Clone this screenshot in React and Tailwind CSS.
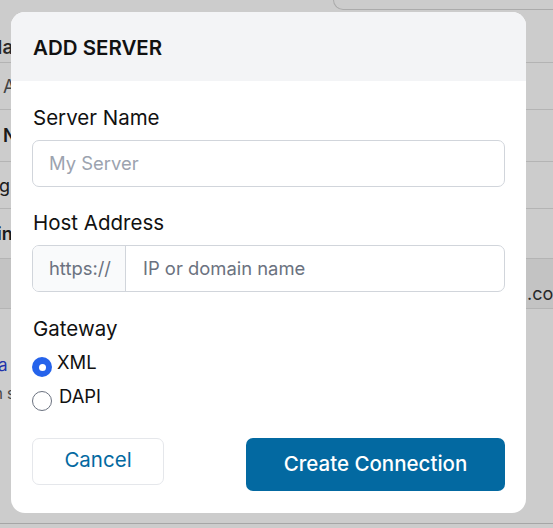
import React from "react";

function BgRow({ h, left, leftCls = "", right, shade = false }) {
  return (
    <div className={`relative flex items-center border-b border-[#e2e2e2] ${shade ? "bg-[#f4f4f4]" : ""}`} style={{ height: h }}>
      <span className={`absolute text-[18px] text-[#222] whitespace-nowrap ${leftCls}`}>{left}</span>
      {right && <span className="absolute left-[527px] top-[21px] text-[18px] text-[#333] whitespace-nowrap">{right}</span>}
    </div>
  );
}

export default function App() {
  return (
    <div className="relative w-[553px] h-[528px] overflow-hidden bg-white" style={{ fontFamily: "Inter, 'Noto Sans', sans-serif" }}>
      {/* background page */}
      <div className="absolute inset-0">
        <div className="ml-[333px] h-[10px] rounded-bl-[10px] border-l border-b border-[#d6d6d6] bg-white" />
        <div>
          <div className="h-[53px] border-b border-[#e0e0e0] relative">
            <span className="absolute left-[-12px] top-[24px] text-[19px] font-semibold text-[#333]">Na</span>
          </div>
          <BgRow h={47} left="t A" leftCls="left-[-8px] text-[#555]" />
          <BgRow h={52} left="t N" leftCls="left-[-8px] font-semibold" />
          <BgRow h={47} left="g" leftCls="left-[-1px]" />
          <BgRow h={50} left="in" leftCls="left-[-3px] font-semibold" />
          <BgRow h={50} left="" right=".co" shade />
          <div className="h-[214px] relative">
            <span className="absolute left-[-12px] top-[44px] text-[17px] text-[#2b3fd6]">na</span>
            <span className="absolute left-[-6px] top-[74px] text-[15px] text-[#555]">n s</span>
          </div>
          <div className="border-b border-[#d0d0d0]" />
        </div>
      </div>
      {/* overlay */}
      <div className="absolute inset-0 bg-black/20" />
      {/* modal */}
      <div className="absolute left-[11px] top-[12px] w-[515px] h-[501px] rounded-[14px] bg-white overflow-hidden flex flex-col">
        <div className="h-[69px] bg-[#f3f4f6] flex items-center px-[22px] pt-[3px]">
          <h2 className="text-[20.5px] font-semibold text-[#111]">ADD SERVER</h2>
        </div>
        <div className="px-[21px] pt-[24px] flex flex-col">
          <label className="text-[20.5px] text-[#111] leading-[26px] pl-[1px]">Server Name</label>
          <div className="mt-[9px] h-[47px] rounded-[7px] border border-[#d1d5db] flex items-center px-[16px]">
            <span className="text-[18.4px] text-[#9ca3af]">My Server</span>
          </div>
          <label className="mt-[23px] text-[20.5px] text-[#111] leading-[26px] pl-[1px]">Host Address</label>
          <div className="mt-[9px] h-[47px] rounded-[7px] border border-[#d1d5db] flex overflow-hidden">
            <div className="w-[93px] bg-[#f9fafb] border-r border-[#d1d5db] flex items-center pl-[16px]">
              <span className="text-[18.4px] text-[#6b7280]">https://</span>
            </div>
            <div className="flex-1 flex items-center pl-[17px]">
              <span className="text-[18.4px] text-[#6b7280]">IP or domain name</span>
            </div>
          </div>
          <label className="mt-[24px] text-[20.5px] text-[#111] leading-[26px] pl-[1px]">Gateway</label>
          <div className="mt-[8px] flex items-center gap-[5px] h-[26px]">
            <span className="w-[20px] h-[20px] rounded-full bg-[#2563eb] flex items-center justify-center mt-[8px]">
              <span className="w-[7px] h-[7px] rounded-full bg-white" />
            </span>
            <span className="text-[18.4px] text-[#111]">XML</span>
          </div>
          <div className="mt-[8px] flex items-center gap-[7px] h-[26px]">
            <span className="w-[20px] h-[20px] rounded-full border border-[#6b7280] bg-white mt-[8px]" />
            <span className="text-[18.4px] text-[#111]">DAPI</span>
          </div>
          <div className="mt-[28px] flex items-start justify-between">
            <button className="w-[132px] h-[47px] rounded-[7px] border border-[#e5e7eb] bg-white text-[20.5px] text-[#0369a1] pb-[3px]">Cancel</button>
            <button className="w-[259px] h-[53px] rounded-[7px] bg-[#0369a1] text-[20.5px] font-medium text-white">Create Connection</button>
          </div>
        </div>
      </div>
    </div>
  );
}
